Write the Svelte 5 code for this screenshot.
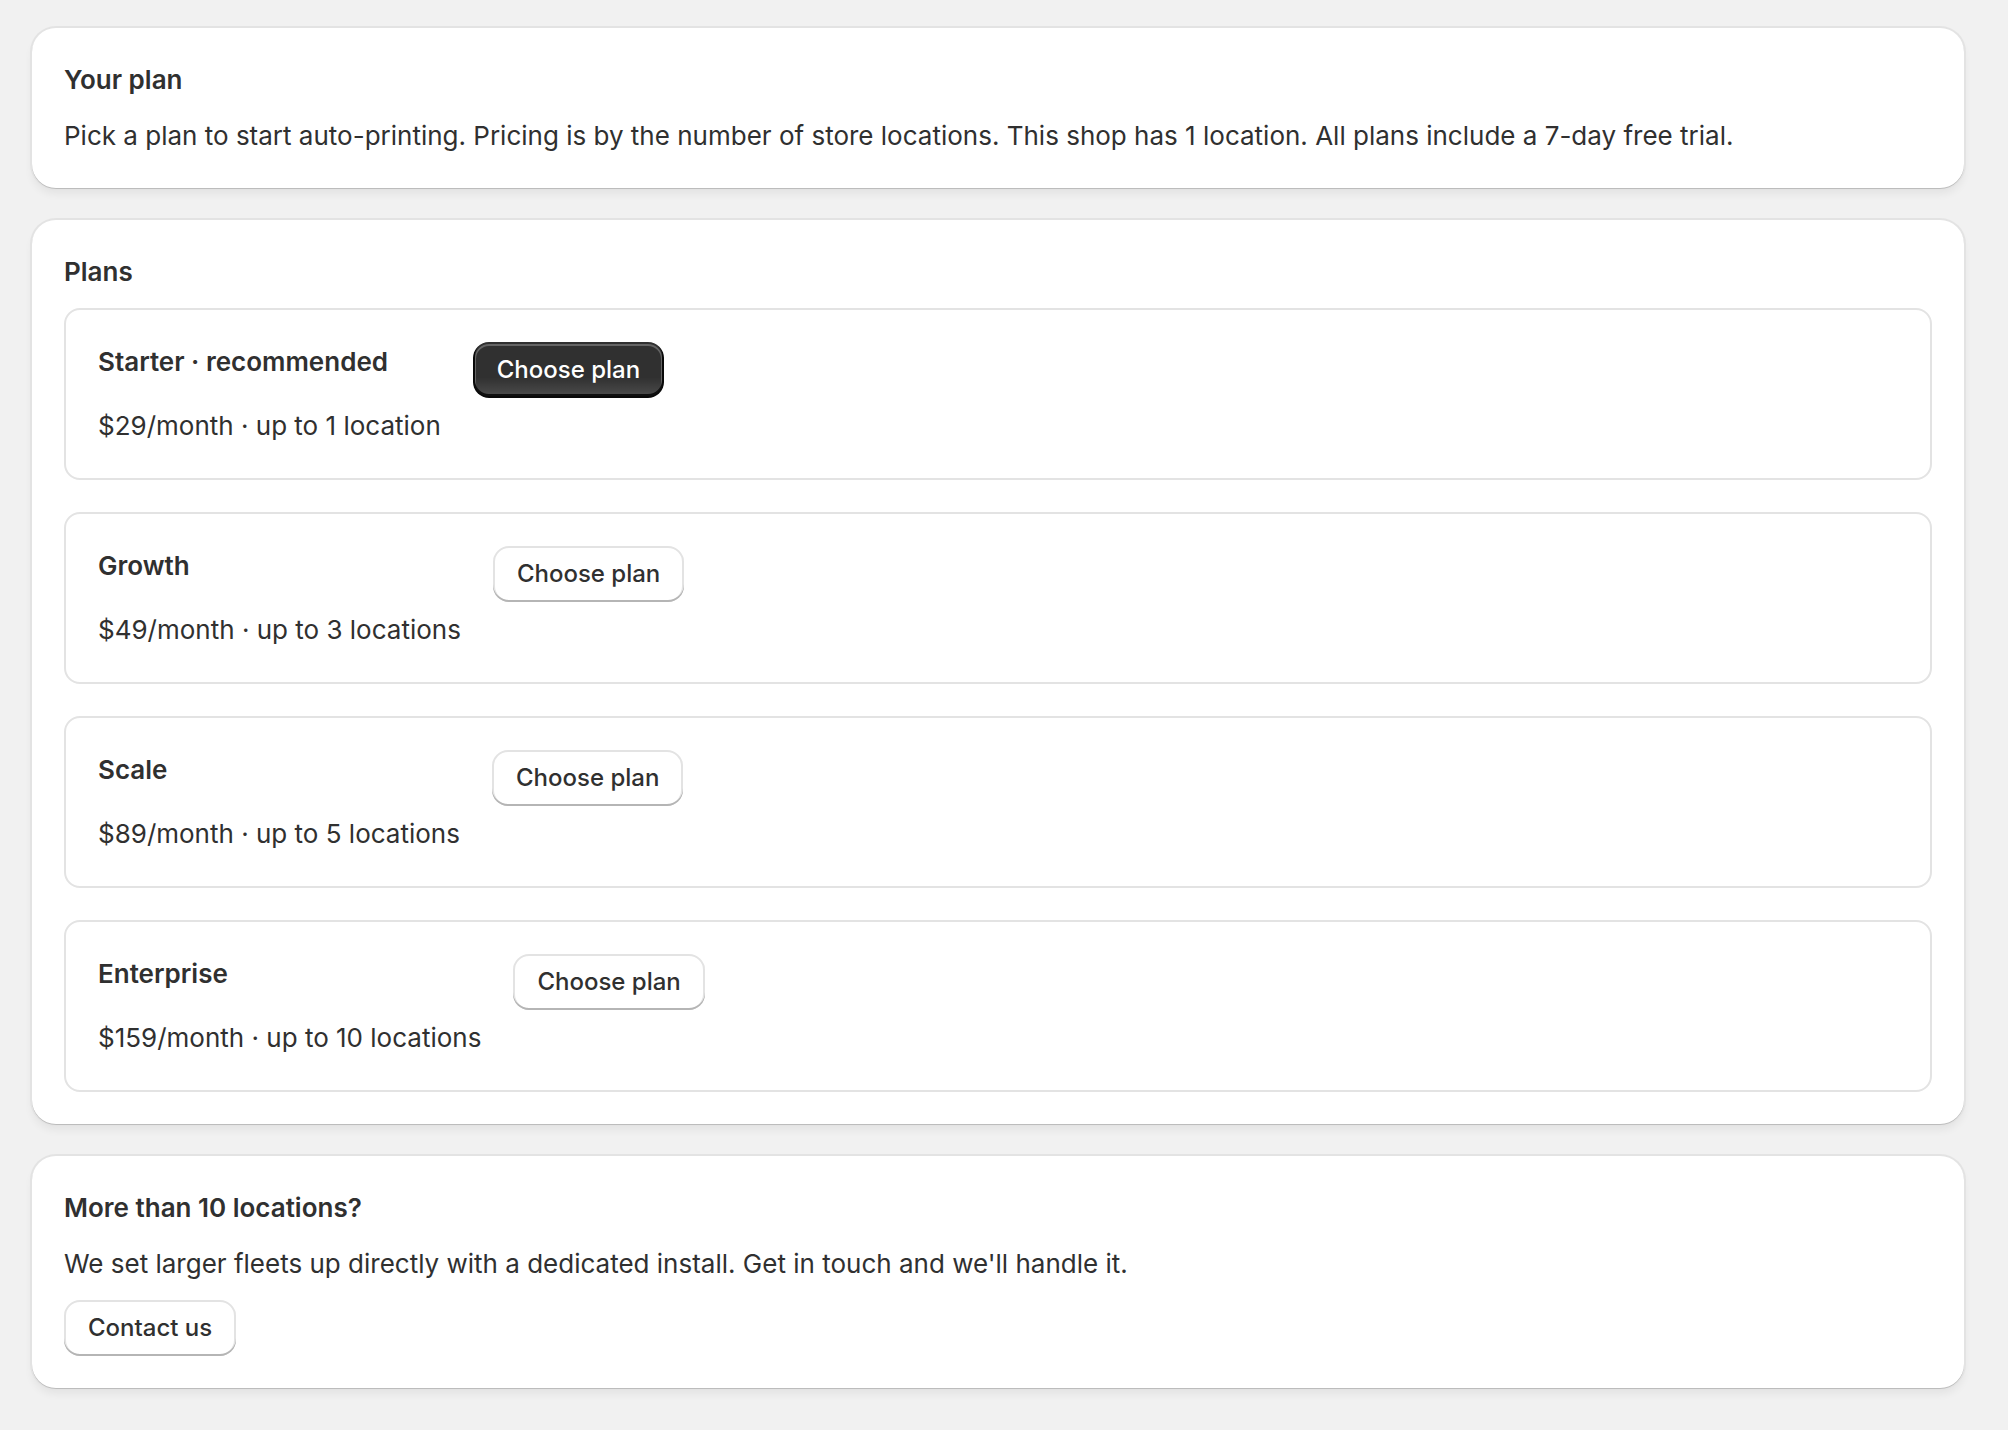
<script>
  const plans = [
    { name: 'Starter', price: 29, limit: '1 location', recommended: true },
    { name: 'Growth', price: 49, limit: '3 locations' },
    { name: 'Scale', price: 89, limit: '5 locations' },
    { name: 'Enterprise', price: 159, limit: '10 locations' }
  ];

  let selected = $state(null);
</script>

<main class="page">
  <section class="card">
    <h2>Your plan</h2>
    <p>
      Pick a plan to start auto-printing. Pricing is by the number of store locations. This shop has
      1 location. All plans include a 7-day free trial.
    </p>
  </section>

  <section class="card">
    <h2>Plans</h2>
    <div class="plans">
      {#each plans as plan}
        <article class="plan">
          <div class="plan-info">
            <h3>{plan.name}{plan.recommended ? ' · recommended' : ''}</h3>
            <p>${plan.price}/month · up to {plan.limit}</p>
          </div>
          <button
            type="button"
            class="btn"
            class:primary={plan.recommended}
            aria-pressed={selected === plan.name}
            onclick={() => (selected = plan.name)}
          >
            Choose plan
          </button>
        </article>
      {/each}
    </div>
  </section>

  <section class="card">
    <h2>More than 10 locations?</h2>
    <p>We set larger fleets up directly with a dedicated install. Get in touch and we'll handle it.</p>
    <button type="button" class="btn">Contact us</button>
  </section>
</main>

<style>
  :global(body) {
    margin: 0;
    background: #f1f1f1;
  }

  .page {
    display: flex;
    flex-direction: column;
    gap: 32px;
    padding: 28px 44px 40px 32px;
    font-family: Inter, 'Liberation Sans', sans-serif;
    font-size: 26px;
    font-weight: 400;
    line-height: 40px;
    color: #303030;
  }

  h2,
  h3,
  p {
    margin: 0;
  }

  h2,
  h3 {
    font-size: 26px;
    font-weight: 600;
  }

  .card {
    display: flex;
    flex-direction: column;
    align-items: flex-start;
    gap: 16px;
    padding: 32px;
    background: #fff;
    border-radius: 24px;
    box-shadow:
      0 1px 0 0 rgba(0, 0, 0, 0.17),
      0 0 0 2px #e3e3e3,
      0 6px 8px rgba(0, 0, 0, 0.06);
  }

  .plans {
    display: flex;
    flex-direction: column;
    gap: 32px;
    align-self: stretch;
  }

  .plan {
    display: flex;
    align-items: flex-start;
    gap: 32px;
    padding: 32px;
    border: 2px solid #e3e3e3;
    border-radius: 16px;
  }

  .plan-info {
    display: flex;
    flex-direction: column;
    gap: 24px;
  }

  .btn {
    padding: 12px 24px;
    border: none;
    border-radius: 16px;
    background: #fff;
    box-shadow:
      inset 0 -2px 0 #b5b5b5,
      inset 0 0 0 2px #e3e3e3;
    color: #303030;
    font: inherit;
    font-size: 24px;
    font-weight: 500;
    line-height: 32px;
    cursor: pointer;
  }

  .btn:hover {
    background: #fafafa;
  }

  .btn.primary {
    background: linear-gradient(180deg, rgba(48, 48, 48, 0) 63%, rgba(255, 255, 255, 0.15) 100%), #303030;
    box-shadow:
      inset 0 -2px 0 2px rgba(0, 0, 0, 0.8),
      inset 0 0 0 2px #303030,
      inset 0 1px 0 3px rgba(255, 255, 255, 0.25);
    color: #fff;
  }

  .btn.primary:hover {
    background: #1a1a1a;
  }
</style>
